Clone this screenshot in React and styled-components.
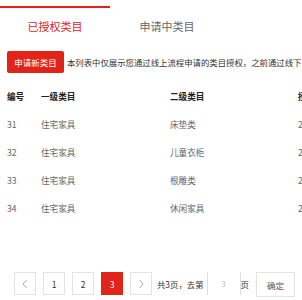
import React from 'react'
import styled, { createGlobalStyle } from 'styled-components'

const GlobalStyle = createGlobalStyle`
    html, body {
        margin: 0;
        padding: 0;
        background: #fff;
        overflow: hidden;
    }
    body {
        font-family: "Noto Sans CJK SC", "Noto Sans", sans-serif;
        color: #333;
    }
`

const RED = '#e2231a'

const Page = styled.div`
    width: 302px;
    height: 300px;
    overflow: hidden;
`

const Indicator = styled.div`
    width: 110px;
    height: 2px;
    margin-top: 6px;
    background: ${RED};
`

const Tabs = styled.div`
    display: flex;
    gap: 2px;
    height: 32px;
    margin-top: 2px;
`

const Tab = styled.div`
    width: 110px;
    display: flex;
    align-items: center;
    justify-content: center;
    font-size: 11px;
    color: ${(p) => (p.active ? RED : '#666')};
`

const Toolbar = styled.div`
    display: flex;
    align-items: center;
    gap: 3px;
    padding-left: 7px;
    margin-top: 9px;
    white-space: nowrap;
`

const RedButton = styled.button`
    flex: none;
    width: 57px;
    height: 22px;
    padding: 0;
    border: none;
    border-radius: 2px;
    background: ${RED};
    color: #fff;
    font-family: inherit;
    font-size: 8.5px;
`

const Note = styled.span`
    font-size: 8.4px;
    color: #333;
`

const Table = styled.div`
    margin-top: 9px;
    padding-left: 7px;
`

const Row = styled.div`
    display: grid;
    grid-template-columns: 34px 129px 128px 100px;
    height: 28px;
    align-items: center;
    font-size: 8.6px;
    white-space: nowrap;
    color: ${(p) => (p.head ? '#222' : '#666')};
    font-weight: ${(p) => (p.head ? 700 : 400)};
`

const Pager = styled.div`
    display: flex;
    align-items: center;
    margin-top: 48px;
    padding-left: 14px;
    white-space: nowrap;
`

const PageBtn = styled.div`
    width: 22px;
    height: 23px;
    box-sizing: border-box;
    margin-right: 7px;
    display: flex;
    align-items: center;
    justify-content: center;
    border: 1px solid ${(p) => (p.active ? RED : '#e3e3e3')};
    background: ${(p) => (p.active ? RED : '#fff')};
    color: ${(p) => (p.active ? '#fff' : '#333')};
    font-size: 8.5px;
`

const PagerText = styled.span`
    font-size: 8.4px;
    color: #333;
    margin-left: -2px;
`

const PageInput = styled.div`
    width: 34px;
    height: 23px;
    box-sizing: border-box;
    margin: 0 2px 0 3px;
    border-left: 1px solid #e0e0e0;
    border-right: 1px solid #e0e0e0;
    display: flex;
    align-items: center;
    justify-content: center;
    font-size: 8px;
    color: #bbb;
`

const Confirm = styled.div`
    width: 39px;
    height: 25px;
    box-sizing: border-box;
    margin-left: 7px;
    margin-top: 2px;
    border: 1px solid #e3e3e3;
    display: flex;
    align-items: center;
    justify-content: center;
    font-size: 8.5px;
    color: #555;
`

const Chevron = ({ dir }) => (
    <svg width="8" height="10" viewBox="0 0 8 10">
        <path
            d={dir === 'left' ? 'M5.5 1 L2 5 L5.5 9' : 'M2.5 1 L6 5 L2.5 9'}
            fill="none"
            stroke="#aab"
            strokeWidth="1"
        />
    </svg>
)

const rows = [
    { id: 31, first: '住宅家具', second: '床垫类' },
    { id: 32, first: '住宅家具', second: '儿童衣柜' },
    { id: 33, first: '住宅家具', second: '根雕类' },
    { id: 34, first: '住宅家具', second: '休闲家具' },
]

export default function App() {
    return (
        <Page>
            <GlobalStyle />
            <Indicator />
            <Tabs>
                <Tab active>已授权类目</Tab>
                <Tab>申请中类目</Tab>
            </Tabs>
            <Toolbar>
                <RedButton>申请新类目</RedButton>
                <Note>本列表中仅展示您通过线上流程申请的类目授权，之前通过线下流程申请的类目授权请联系客服查询</Note>
            </Toolbar>
            <Table>
                <Row head>
                    <span>编号</span>
                    <span>一级类目</span>
                    <span>二级类目</span>
                    <span>授权时间</span>
                </Row>
                {rows.map((r) => (
                    <Row key={r.id}>
                        <span>{r.id}</span>
                        <span>{r.first}</span>
                        <span>{r.second}</span>
                        <span>2018-06-12</span>
                    </Row>
                ))}
            </Table>
            <Pager>
                <PageBtn><Chevron dir="left" /></PageBtn>
                <PageBtn>1</PageBtn>
                <PageBtn>2</PageBtn>
                <PageBtn active>3</PageBtn>
                <PageBtn><Chevron dir="right" /></PageBtn>
                <PagerText>共3页，去第</PagerText>
                <PageInput>3</PageInput>
                <PagerText>页</PagerText>
                <Confirm>确定</Confirm>
            </Pager>
        </Page>
    )
}
